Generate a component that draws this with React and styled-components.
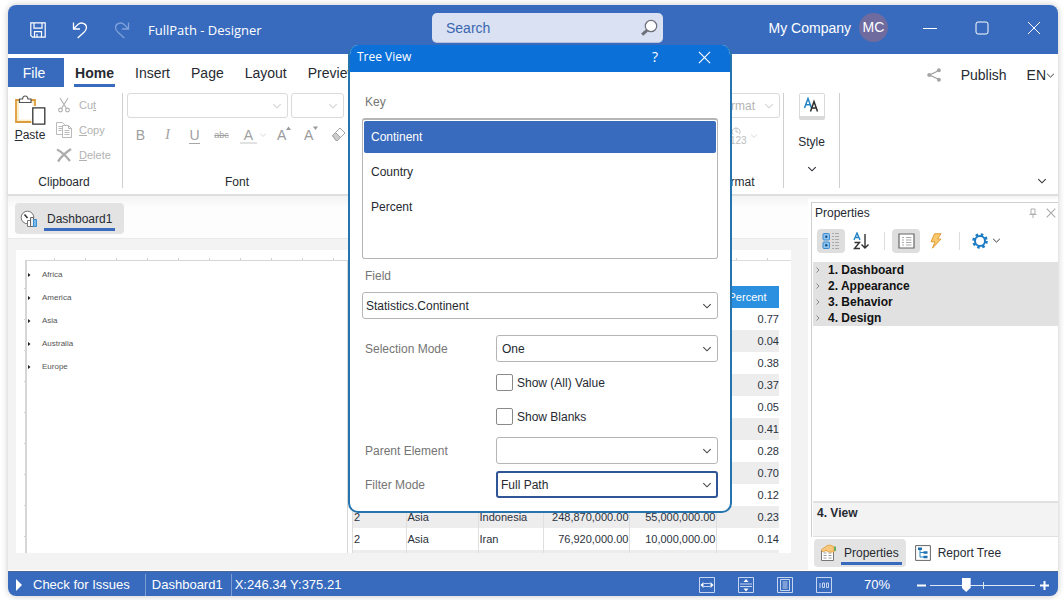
import React, { useState } from "react";
import styled, { createGlobalStyle, css } from "styled-components";

const blue = "#386bbd";
const grey = "#f3f3f3";
const ink = "#262a31";

const Global = createGlobalStyle`
  * { box-sizing: border-box; }
  body { margin: 0; background: #fff; color: ${ink}; font-family: "Liberation Sans", Arial, sans-serif; font-size: 12px; line-height: 16px; }
  button, input, select { font: inherit; color: inherit; }
  button { padding: 0; border: 0; background: none; }
  svg { display: block; flex: none; }
`;

const Window = styled.div`
  position: relative;
  display: flex;
  flex-direction: column;
  margin: 5px 6px 4px 8px;
  height: calc(100vh - 9px);
  min-width: 1000px;
  border-radius: 8px;
  box-shadow: 0 0 7px rgba(0, 0, 0, 0.22);
  background: #fff;
`;

/* title bar */
const TitleBar = styled.header`
  display: grid;
  grid-template-columns: 424fr 231px 395fr;
  flex: none;
  height: 49px;
  background: ${blue};
  border-radius: 8px 8px 0 0;
  color: #fff;
`;
const QuickAccess = styled.div`
  display: flex;
  align-items: center;
  padding-left: 22px;
  gap: 26px;
`;
const IconButton = styled.button`
  display: flex;
  align-items: center;
  justify-content: center;
  flex: none;
  width: ${(p) => p.$size || 16}px;
  height: ${(p) => p.$size || 16}px;
`;
const WindowTitle = styled.h1`
  margin: 0 0 0 -8px;
  font: 400 13px/18px "Open Sans", sans-serif;
`;
const SearchBox = styled.label`
  display: flex;
  align-items: center;
  height: 30px;
  margin-top: 8px;
  padding: 0 5px 0 14px;
  border-radius: 5px;
  background: #d9e1f2;
  border-bottom: 1px solid #b6c2dc;
  color: ${blue};
`;
const SearchInput = styled.input`
  flex: 1;
  min-width: 0;
  padding: 0;
  border: 0;
  outline: 0;
  background: none;
  font-size: 14px;
  &::placeholder { color: #3a67b0; opacity: 1; }
`;
const Account = styled.div`
  display: flex;
  align-items: center;
  justify-content: flex-end;
  padding: 0 17px 4px 0;
  font-size: 14px;
`;
const Avatar = styled.span`
  width: 29px;
  margin: 0 35px 0 8px;
  border-radius: 50%;
  background: #6f6b9f;
  line-height: 29px;
  text-align: center;
`;
const WindowButtons = styled.div`
  display: flex;
  gap: 38px;
`;

/* ribbon */
const RibbonTabs = styled.nav`
  display: flex;
  flex: none;
  height: 33px;
  padding-top: 4px;
  font-size: 14px;
`;
const FileTab = styled.button`
  width: 56px;
  height: 29px;
  padding-right: 4px;
  background: ${blue};
  color: #fff;
`;
const RibbonTab = styled.button`
  height: 29px;
  margin-left: ${(p) => (p.$active ? 10 : 21)}px;
  ${(p) =>
    p.$active &&
    css`
      width: 41px;
      margin-right: -1px;
      font-weight: 700;
      box-shadow: inset 0 -3px ${blue};
    `}
`;
const RibbonActions = styled.div`
  display: flex;
  align-items: center;
  gap: 20px;
  margin-left: auto;
  padding: 5px 3px 0 0;
`;
const LanguageButton = styled.button`
  display: flex;
  align-items: center;
`;
const Ribbon = styled.section`
  display: flex;
  flex: none;
  height: 109px;
  padding: 6px 0;
  border-bottom: 2px solid #dedede;
  box-shadow: 0 2px 3px rgba(0, 0, 0, 0.06);
`;
const Group = styled.div`
  display: flex;
  flex-direction: column;
  width: ${(p) => p.$width}px;
  margin-left: ${(p) => p.$offset || 0}px;
  border-right: 1px solid #cfcfcf;
`;
const GroupBody = styled.div`
  display: flex;
  flex: 1;
  flex-direction: ${(p) => (p.$column ? "column" : "row")};
`;
const GroupLabel = styled.div`
  padding-right: 2px;
  line-height: 12px;
  text-align: center;
`;
const PasteButton = styled.button`
  display: flex;
  flex-direction: column;
  align-items: center;
  gap: 2px;
  width: 44px;
  height: 52px;
  padding-top: 2px;
`;
const Commands = styled.div`
  display: flex;
  flex-direction: column;
  gap: 9px;
  padding: 4px 0 0 4px;
`;
const Command = styled.button`
  display: flex;
  align-items: center;
  gap: 7px;
  height: 16px;
  font-size: 11px;
  color: #b2b2b2;
`;
const FontPickers = styled.div`
  display: flex;
  gap: 3px;
  padding-left: 4px;
`;
const FontTools = styled.div`
  display: flex;
  gap: 10px;
  padding: 8px 0 0 9px;
`;
const FormatTools = styled.div`
  display: flex;
  justify-content: flex-end;
  padding: 8px 25px 0 0;
`;
const StyleButton = styled.button`
  display: flex;
  flex-direction: column;
  align-items: center;
  width: 100%;
  gap: 14px;
`;
const StyleTile = styled.span`
  display: flex;
  justify-content: center;
  width: 26px;
  height: 27px;
  padding-top: 3px;
  border: 1px solid #d9d9d9;
  border-bottom-width: 4px;
  border-radius: 2px;
`;
const CollapseButton = styled.button`
  align-self: flex-end;
  margin: 0 11px 0 auto;
  padding: 2px 0;
`;

/* drop-downs */
const SelectFrame = styled.span`
  position: relative;
  display: block;
  width: ${(p) => (p.$width ? p.$width + "px" : "auto")};
  color: ${(p) => (p.$faded ? "#d2d2d2" : "#444")};
  svg { position: absolute; right: 6px; top: calc(50% - 5px); pointer-events: none; }
`;
const SelectControl = styled.select`
  display: block;
  appearance: none;
  width: 100%;
  height: ${(p) => p.$height || 27}px;
  padding: 0 20px 0 ${(p) => p.$inset || 5}px;
  border: ${(p) => (p.$focused ? `2px solid #2f5597` : `1px solid ${p.$faded ? "#dadada" : "#b5b5b5"}`)};
  border-radius: 3px;
  outline: 0;
  background: #fff;
  color: ${(p) => (p.$faded ? "#b5b5b5" : ink)};
  opacity: 1;
`;

/* work area */
const WorkArea = styled.main`
  display: flex;
  flex: 1;
  min-height: 0;
`;
const Designer = styled.section`
  display: flex;
  flex-direction: column;
  flex: 1;
  min-width: 0;
  margin-right: 3px;
  border-bottom: 1px solid #fff;
  background: ${grey};
`;
const DocTabs = styled.div`
  flex: none;
  height: 43px;
  padding: 7px 0 0 7px;
  border-bottom: 1px solid #e9e9e9;
  background: linear-gradient(#f3f3f3, #fdfdfd 12px);
`;
const DocTab = styled.button`
  display: flex;
  align-items: center;
  gap: 6px;
  height: 31px;
  padding: 0 9px 0 5px;
  border-radius: 4px;
  background: #e3e3e3;
`;
const Underlined = styled.span`
  padding: 4px 3px;
  box-shadow: inset 0 -3px ${blue};
`;
const Sheet = styled.div`
  display: flex;
  flex: 1;
  min-height: 0;
  margin: 11px 17px 17px 8px;
  padding-left: 9px;
  overflow: hidden;
  background:
    repeating-linear-gradient(90deg, transparent 0 30px, #d0d0d0 30px 31px) 8px 8px / 100% 2px no-repeat,
    repeating-linear-gradient(transparent 0 30px, #d0d0d0 30px 31px) 8px 8px / 2px 100% no-repeat,
    #fff;
`;
const TreePanel = styled.ul`
  width: 323px;
  flex: none;
  margin: 10px 0 0;
  padding: 2px 0 0;
  list-style: none;
  border: 1px solid #d6d6d6;
  border-width: 1px 1px 0 2px;
`;
const TreeItem = styled.li`
  display: flex;
  align-items: center;
  gap: 11px;
  height: 23px;
  padding-left: 1px;
  font-size: 8px;
  color: #555;
`;
const TablePanel = styled.div`
  flex: 1;
  margin: 10px 0 0 4px;
  padding: 25px 13px 0 0;
  border: 1px solid #dcdcdc;
  border-width: 1px 0 0 1px;
`;
const DataTable = styled.table`
  width: 100%;
  table-layout: fixed;
  border-collapse: collapse;
  font-size: 11px;
  color: #2b323d;
`;
const HeadCell = styled.th`
  height: 22px;
  padding: 0;
  background: #2b90df;
  color: #fff;
  font-weight: 400;
`;
const Row = styled.tr`
  background: ${(p) => (p.$shaded ? "#ededed" : "#fff")};
`;
const Cell = styled.td`
  height: 22px;
  padding: 0 0 0 1px;
  border-right: ${(p) => (p.$last ? 0 : 1)}px solid #dfdfdf;
  text-align: ${(p) => (p.$number ? "right" : "left")};
  line-height: 14px;
`;

/* properties */
const Properties = styled.aside`
  display: flex;
  flex-direction: column;
  flex: none;
  width: 247px;
  padding: 6px 0 4px;
`;
const PropertiesFrame = styled.div`
  display: flex;
  flex-direction: column;
  flex: 1;
  border: 1px solid #cfcfcf;
  border-width: 1px 0 0 1px;
`;
const PanelTitle = styled.div`
  display: flex;
  align-items: center;
  gap: 8px;
  height: 19px;
  padding: 0 2px 0 3px;
  color: #a8a8a8;
`;
const PanelName = styled.h2`
  flex: 1;
  margin: 0;
  font-size: 12px;
  font-weight: 400;
  color: ${ink};
`;
const PanelTools = styled.div`
  display: flex;
  align-items: center;
  height: 40px;
  padding: 0 0 3px 5px;
`;
const ToolButton = styled.button`
  display: flex;
  align-items: center;
  justify-content: center;
  gap: 4px;
  width: ${(p) => p.$width || 28}px;
  height: 24px;
  margin-right: 2px;
  border-radius: 4px;
  background: ${(p) => (p.$active ? "#dedede" : "none")};
`;
const Divider = styled.span`
  width: 1px;
  height: 18px;
  margin: 0 7px;
  background: #ddd;
`;
const Categories = styled.ul`
  margin: 0 0 0 1px;
  padding: 0;
  list-style: none;
  background: #e1e1e1;
  font-weight: 700;
`;
const Category = styled.li`
  display: flex;
  align-items: center;
  gap: 8px;
  height: 16px;
  padding-left: 3px;
  color: #111;
`;
const Description = styled.div`
  height: 36px;
  margin: auto 0 0 1px;
  padding: 2px 4px;
  border: 1px solid #e0e0e0;
  border-width: 2px 0 1px;
  background: ${grey};
  font-weight: 700;
`;
const PanelTabs = styled.div`
  display: flex;
  align-items: center;
  gap: 9px;
  padding: 2px 0 0 3px;
`;
const PanelTab = styled.button`
  display: flex;
  align-items: center;
  gap: ${(p) => (p.$active ? 4 : 7)}px;
  height: 28px;
  padding: ${(p) => (p.$active ? "0 4px 0 6px" : "0")};
  border-radius: 4px;
  background: ${(p) => (p.$active ? "#e3e3e3" : "none")};
`;

/* status bar */
const StatusBar = styled.footer`
  display: flex;
  align-items: center;
  flex: none;
  height: 25px;
  padding: 2px 9px 0 8px;
  border-top: 1px solid #4a6797;
  border-radius: 0 0 8px 8px;
  background: ${blue};
  color: #fff;
  font-size: 13px;
`;
const StatusButton = styled.button`
  display: flex;
  align-items: center;
  gap: 11px;
  padding-right: 15px;
`;
const StatusText = styled.span`
  padding: 0 ${(p) => p.$after || 0}px 0 ${(p) => p.$before || 3}px;
  border-left: 1px solid #7d9dd2;
  line-height: 22px;
`;
const ViewButtons = styled.div`
  display: flex;
  gap: 23px;
  margin-left: auto;
`;
const ZoomValue = styled.span`
  width: 85px;
  padding-left: 32px;
`;
const ZoomSlider = styled.input`
  appearance: none;
  width: 105px;
  height: 15px;
  margin: 0 5px 0 4px;
  background:
    linear-gradient(#dfe8f6, #dfe8f6) 53px 4px / 1px 7px no-repeat,
    linear-gradient(#dfe8f6, #dfe8f6) 0 7px / 100% 1px no-repeat;
  &::-webkit-slider-thumb {
    appearance: none;
    width: 9px;
    height: 14px;
    background: #fff;
    clip-path: polygon(0 0, 100% 0, 100% 70%, 50% 100%, 0 70%);
  }
`;

/* dialog */
const Dialog = styled.div`
  position: absolute;
  top: 40px;
  left: calc(50% - 185px);
  width: 384px;
  overflow: hidden;
  border: 2px solid #2574ae;
  border-top: 0;
  border-radius: 10px;
  background: #fff;
`;
const DialogBar = styled.div`
  display: flex;
  align-items: center;
  height: 27px;
  margin: 0 -2px;
  padding: 0 21px 3px 9px;
  background: #0b71d9;
  color: #fff;
`;
const DialogTitle = styled.h2`
  flex: 1;
  margin: 0;
  font: 400 12px/18px "Open Sans", sans-serif;
`;
const HelpButton = styled(IconButton)`
  margin-right: 34px;
  font: 400 14px/16px "Open Sans", sans-serif;
`;
const DialogBody = styled.div`
  display: flex;
  flex-direction: column;
  padding: 22px 12px 13px;
`;
const Caption = styled.label`
  display: block;
  padding-left: 3px;
  color: #757575;
`;
const KeyList = styled.div`
  display: flex;
  flex-direction: column;
  gap: 3px;
  height: 141px;
  margin: 8px 0 9px;
  padding: 1px;
  border: 1px solid #b5b5b5;
  border-top-width: 2px;
  border-radius: 3px;
`;
const KeyOption = styled.button`
  flex: none;
  height: 32px;
  padding-left: 7px;
  border-radius: 2px;
  background: ${(p) => (p.$selected ? blue : "none")};
  color: ${(p) => (p.$selected ? "#fff" : ink)};
  text-align: left;
`;
const FieldSlot = styled.div`
  margin: 8px 0 16px;
`;
const Form = styled.div`
  display: grid;
  grid-template-columns: 134px 1fr;
  grid-auto-rows: 27px;
  align-items: center;
  row-gap: 7px;
`;
const CheckLabel = styled.label`
  grid-column: 2;
  display: flex;
  align-items: center;
  gap: 4px;
`;
const CheckBox = styled.input`
  appearance: none;
  width: 17px;
  height: 17px;
  margin: 0;
  border: 1px solid #8a8a8a;
  border-radius: 2px;
  background: #fff;
  &:checked { background: ${blue}; }
`;

function Chevron({ color = "currentColor", size = 10 }) {
  return (
    <svg width={size} height={size} viewBox="0 0 10 10" fill="none" stroke={color} strokeWidth="1.1">
      <path d="M1.3 3.2 5 6.8 8.7 3.2" />
    </svg>
  );
}

function Select({ options, width, height, inset, focused, faded, ...rest }) {
  return (
    <SelectFrame $width={width} $faded={faded}>
      <SelectControl $height={height} $inset={inset} $focused={focused} $faded={faded} disabled={faded} {...rest}>
        {options.map((o) => (
          <option key={o}>{o}</option>
        ))}
      </SelectControl>
      <Chevron />
    </SelectFrame>
  );
}

const Svg = ({ w = 16, h = w, box, children, ...rest }) => (
  <svg width={w} height={h} viewBox={box || `0 0 ${w} ${h}`} fill="none" {...rest}>
    {children}
  </svg>
);

const SaveIcon = () => (
  <Svg stroke="#fff" strokeWidth="1.2">
    <path d="M.8.8h14.4v14.4H2.6L.8 13.4zM4 .8v5.4h8V.8M4.5 15V9.6h7V15M7 15v-3" />
  </Svg>
);
const UndoIcon = ({ flip }) => (
  <Svg w={16} h={18} stroke={flip ? "#7fa2dc" : "#fff"} strokeWidth="1.3">
    <path
      transform={flip ? "matrix(-1 0 0 1 16 0)" : undefined}
      d="M1.5 1.5V8H8M2 7.5 6 3.4C9 .6 14.5 2.4 14.5 6.6c0 1.900-1 3.200-2.500 4.600L5.700 17"
    />
  </Svg>
);
const SearchIcon = () => (
  <Svg w={18} stroke="#6d7078">
    <circle cx="11" cy="7" r="5.7" fill="#fff" strokeWidth="1.2" />
    <path d="M7 11.4 2.2 15.6" strokeWidth="3" />
  </Svg>
);
const CrossIcon = ({ size = 14, color = "currentColor", weight = 1.2 }) => (
  <Svg w={size} box="0 0 14 14" stroke={color} strokeWidth={weight}>
    <path d="m1 1 12 12M13 1 1 13" />
  </Svg>
);
const ShareIcon = () => (
  <Svg w={14} stroke="#9c9c9c">
    <path d="M12 2.5 2.500 7 12 11.500" strokeWidth="1.200" />
    <circle cx="2.300" cy="7" r="2.100" fill="#a5a5a5" stroke="none" />
    <circle cx="11.900" cy="2.300" r="2" fill="#a5a5a5" stroke="none" />
    <circle cx="11.900" cy="11.700" r="2" fill="#a5a5a5" stroke="none" />
  </Svg>
);
const PasteIcon = () => (
  <Svg w={32} h={30}>
    <path d="M2 5h19v22H2z" fill="#fdeecb" stroke="#dd9c3c" strokeWidth="1.8" />
    <path d="M5 7.500h13.500v17H5z" fill="#fff" />
    <path d="M5.500 7.500V4h3C8.700 1.900 10 1 11.200 1s2.600.9 2.800 3h3v3.500z" fill="#fff" stroke="#555" strokeWidth="1.200" />
    <path d="M17.300 11h13.500v18.500H17.300z" fill="#fff" />
    <path d="M18.800 12.800h12v16.400h-12z" fill="#fff" stroke="#333" strokeWidth="1.300" />
  </Svg>
);
const CutIcon = () => (
  <Svg stroke="#b0b0b0" strokeWidth="1.100">
    <path d="m4 1 6.500 10.500M12 1 5.500 11.500" />
    <circle cx="4.500" cy="13" r="1.900" />
    <circle cx="11.500" cy="13" r="1.900" />
  </Svg>
);
const CopyIcon = () => (
  <Svg stroke="#b9b9b9">
    <path d="M.5.5h6l2 2v10h-8zM2.500 4.500h4M2.500 6.500h4M2.500 8.500h3" />
    <path d="M6.500 3.500h6l3 3v9h-9z" fill="#fff" />
    <path d="M12.500 3.500v3h3M8.500 8.500h5M8.500 10.500h5M8.500 12.500h5" />
  </Svg>
);
const DeleteIcon = () => (
  <Svg stroke="#adadad" strokeWidth="2.300">
    <path d="M1 2.500C6 5 10 9 14 14M15 2C9 6 5 10 2 14.500" />
  </Svg>
);

const faint = "#a3a3a3";
const Glyph = styled.button`
  flex: none;
  width: 17px;
  height: 18px;
  color: #a0a0a0;
  font: ${(p) => (p.$italic ? "italic" : "normal")} 400 14px/18px ${(p) => (p.$italic ? `"Liberation Serif", serif` : `"Liberation Sans", sans-serif`)};
  text-align: center;
`;
const UnderGlyph = styled(Glyph)`
  border-bottom: 1px solid #a6a6a6;
  width: 11px;
  margin: 0 3px;
`;
const StruckGlyph = styled(Glyph)`
  font-size: 9px;
  text-decoration: line-through;
`;
const SwatchGlyph = styled(Glyph)`
  border-bottom: 2px solid #e2e2e2;
`;
const SizeGlyph = styled.button`
  display: flex;
  width: 17px;
  height: 18px;
  color: #9a9a9a;
  font-size: 14px;
  line-height: 19px;
`;
const ColorGlyph = styled.button`
  display: flex;
  align-items: center;
  gap: 2px;
  color: #d5d5d5;
`;
const EraserIcon = () => (
  <Svg stroke={faint}>
    <path d="M1.500 9.500 9 2l5 5-7.500 7.500H5z" />
    <path d="m1.500 9.500 3-3 5 5-3 3H5z" fill="#ccc" />
  </Svg>
);
const Arrow = ({ down }) => (
  <Svg w={5} h={4}>
    <path fill="#9a9a9a" d={down ? "M0 .5h5L2.500 4z" : "M0 4h5L2.500.5z"} />
  </Svg>
);
const DateFormatIcon = () => (
  <Svg w={18} h={20} stroke="#c6c6c6">
    <path d="M3 8.500A4 4 0 1 1 9.500 8M6 2v4h2.500" />
    <text x="0" y="17.500" fill="#bdbdbd" stroke="none" fontSize="10">123</text>
  </Svg>
);
const StyleIcon = () => (
  <Svg w={18} h={16} strokeWidth="1.500">
    <path d="M1.500 11 5 1.500 8.500 11M2.700 7.800h4.600" stroke="#2483c5" />
    <path d="m7.500 14.500 3.500-10 3.500 10M8.700 11h4.600" stroke="#303030" />
  </Svg>
);
const DashboardIcon = () => (
  <Svg w={18} h={18}>
    <circle cx="7.500" cy="7.500" r="6.300" fill="#fff" stroke="#777" />
    <path d="m4.500 4.500 3 3.500" stroke="#333" strokeWidth="1.600" />
    <path d="M7.500 10.500h3v6h-3z" fill="#fff" stroke="#777" />
    <path d="M10.500 7.500h3v9h-3z" fill="#eee" stroke="#666" />
    <path d="M13.500 9.500h3v7h-3z" fill="#79b8ea" stroke="#3b8fcf" />
  </Svg>
);
const CategoryIcon = () => (
  <Svg w={18} h={18}>
    <rect x="1" y="1.500" width="6.500" height="6.500" rx="1" fill="#8cc3ef" stroke="#3d8bd0" />
    <rect x="1" y="10" width="6.500" height="6.500" rx="1" fill="#8cc3ef" stroke="#3d8bd0" />
    <circle cx="4.250" cy="4.750" r="1.200" fill="#174d84" />
    <circle cx="4.250" cy="13.250" r="1.200" fill="#174d84" />
    <path d="M10 1.500h2m1 0h4M10 4.500h2m1 0h4M10 7.500h2m1 0h4M10 10.500h2m1 0h4M10 13.500h2m1 0h4M10 16.500h2m1 0h4" stroke="#aaa" />
  </Svg>
);
const SortIcon = () => (
  <Svg w={18} h={18}>
    <path d="M2 8 5 1l3 7M3 5.500h4" stroke="#2483c5" strokeWidth="1.400" />
    <path d="M2.500 10.500h5L2.500 16.500h5.500" stroke="#333" strokeWidth="1.400" />
    <path d="M13 2v14M9.500 12.500 13 16l3.500-3.500" stroke="#333" strokeWidth="1.400" />
  </Svg>
);
const ListIcon = () => (
  <Svg w={17} h={16}>
    <path d="M1 1h15v14H1z" fill="#fff" stroke="#666" strokeWidth="1.200" />
    <path d="M4 4.500h2m2 0h5.500M4 7h2m2 0h5.500M4 9.500h2m2 0h5.500M4 12h2m2 0h5.500" stroke="#aaa" />
  </Svg>
);
const BoltIcon = () => (
  <Svg w={12} h={16}>
    <path d="M4.500.8h6.500L7.500 6H11L2.500 15.200 5 8.800H1z" fill="#f8c96d" stroke="#e39b34" />
  </Svg>
);
const GearIcon = () => (
  <Svg w={16} stroke="#1d7cc4">
    <circle cx="8" cy="8" r="6.300" strokeWidth="3" strokeDasharray="2.470 2.470" />
    <circle cx="8" cy="8" r="5" strokeWidth="2" />
  </Svg>
);
const PinIcon = () => (
  <Svg w={8} h={10} stroke="#b0b0b0">
    <path d="M2 1h4v5H2zM.5 6.500h7M4 6.500V10" />
  </Svg>
);
const PropertiesIcon = () => (
  <Svg w={17} h={18}>
    <path d="M1.500 6.500h12v10h-12z" fill="#fff" stroke="#777" />
    <path d="M3.500 9h3M8.500 9h3M3.500 11.500h3M8.500 11.500h3M3.500 14h3M8.500 14h3" stroke="#999" />
    <path d="M1 6 6.500 2C9 .6 11 .8 14 3v5H8.500L6 6.500 3 8z" fill="#f7c77b" stroke="#df9b3b" strokeWidth=".8" />
    <path d="M14 2.500h2V7h-2z" fill="#6fae62" />
  </Svg>
);
const TreeIcon = () => (
  <Svg w={16}>
    <path d="M.6.600h14.800v14.800H.6z" fill="#fff" stroke="#666" />
    <path d="M5 4v8h4M5 7.500h4" stroke="#2483c5" />
    <path d="M3 2.500h4v2.500H3zM8.500 6.200h4v2.500h-4zM8.500 10.700h4v2.500h-4z" fill="#1f6fb0" />
  </Svg>
);

const ViewIcon = ({ kind }) => (
  <Svg w={16} stroke="#c6d6f0">
    <path d="M.5.5h15v15H.5z" />
    {kind === "width" && (
      <>
        <path d="M5 6.500h6M5 9.500h6" />
        <path d="M4.500 5v6L1.500 8zM11.500 5v6l3-3z" fill="#fff" stroke="none" />
      </>
    )}
    {kind === "height" && (
      <>
        <path d="M2 7h12M2 9.500h12" />
        <path d="M5.500 5h5L8 2zM5.500 11.500h5l-2.500 3z" fill="#fff" stroke="none" />
      </>
    )}
    {kind === "page" && <path d="M3.500 2.500h9v11h-9zM5.500 5h5M5.500 7h5M5.500 9h5M5.500 11h5" />}
    {kind === "full" && <path d="M4 6v5M6.500 6h2v4.500h-2zM10.500 6h2v4.500h-2z" />}
  </Svg>
);

const countries = ["Africa", "America", "Asia", "Australia", "Europe"];
const percents = ["0.77", "0.04", "0.38", "0.37", "0.05", "0.41", "0.28", "0.70", "0.12"];
const rows = [
  ...percents.map((p) => ["", "", "", "", "", p]),
  ["2", "Asia", "Indonesia", "248,870,000.00", "55,000,000.00", "0.23"],
  ["2", "Asia", "Iran", "76,920,000.00", "10,000,000.00", "0.14"],
  ["", "", "", "", "", ""],
];
const columns = [53, 72, 65, 86, 87, 63];

function TreeViewDialog() {
  const [key, setKey] = useState("Continent");
  return (
    <Dialog role="dialog" aria-labelledby="dialog-title">
      <DialogBar>
        <DialogTitle id="dialog-title">Tree View</DialogTitle>
        <HelpButton>?</HelpButton>
        <IconButton aria-label="Close dialog" $size={14}>
          <CrossIcon size={13} />
        </IconButton>
      </DialogBar>
      <DialogBody>
        <Caption as="span" id="key-label">Key</Caption>
        <KeyList role="listbox" aria-labelledby="key-label">
          {["Continent", "Country", "Percent"].map((k) => (
            <KeyOption key={k} role="option" aria-selected={k === key} $selected={k === key} onClick={() => setKey(k)}>
              {k}
            </KeyOption>
          ))}
        </KeyList>
        <Caption htmlFor="field">Field</Caption>
        <FieldSlot>
          <Select id="field" options={["Statistics.Continent"]} inset={3} />
        </FieldSlot>
        <Form>
          <Caption htmlFor="selection-mode">Selection Mode</Caption>
          <Select id="selection-mode" options={["One"]} />
          <CheckLabel>
            <CheckBox type="checkbox" />
            Show (All) Value
          </CheckLabel>
          <CheckLabel>
            <CheckBox type="checkbox" />
            Show Blanks
          </CheckLabel>
          <Caption htmlFor="parent-element">Parent Element</Caption>
          <Select id="parent-element" options={[""]} />
          <Caption htmlFor="filter-mode">Filter Mode</Caption>
          <Select id="filter-mode" options={["Full Path"]} inset={3} focused />
        </Form>
      </DialogBody>
    </Dialog>
  );
}

export default function App() {
  return (
    <>
      <Global />
      <Window>
        <TitleBar>
          <QuickAccess>
            <IconButton aria-label="Save"><SaveIcon /></IconButton>
            <IconButton aria-label="Undo"><UndoIcon /></IconButton>
            <IconButton aria-label="Redo"><UndoIcon flip /></IconButton>
            <WindowTitle>FullPath - Designer</WindowTitle>
          </QuickAccess>
          <SearchBox>
            <SearchInput placeholder="Search" aria-label="Search" />
            <SearchIcon />
          </SearchBox>
          <Account>
            My Company
            <Avatar>MC</Avatar>
            <WindowButtons>
              <IconButton aria-label="Minimize" $size={14}>
                <Svg w={14} stroke="#fff"><path d="M0 7.500h14" /></Svg>
              </IconButton>
              <IconButton aria-label="Maximize" $size={14}>
                <Svg w={14} stroke="#fff"><rect x="1" y="1" width="12" height="12" rx="2" /></Svg>
              </IconButton>
              <IconButton aria-label="Close" $size={14}><CrossIcon weight={1} /></IconButton>
            </WindowButtons>
          </Account>
        </TitleBar>

        <RibbonTabs>
          <FileTab>File</FileTab>
          <RibbonTab $active>Home</RibbonTab>
          {["Insert", "Page", "Layout", "Preview"].map((t) => (
            <RibbonTab key={t}>{t}</RibbonTab>
          ))}
          <RibbonActions>
            <IconButton aria-label="Share" $size={14}><ShareIcon /></IconButton>
            <button>Publish</button>
            <LanguageButton>EN<Chevron size={9} color="#333" /></LanguageButton>
          </RibbonActions>
        </RibbonTabs>

        <Ribbon>
          <Group $width={115}>
            <GroupBody>
              <PasteButton>
                <PasteIcon />
                <span><u>P</u>aste</span>
              </PasteButton>
              <Commands>
                <Command><CutIcon /><span>Cu<u>t</u></span></Command>
                <Command><CopyIcon /><span><u>C</u>opy</span></Command>
                <Command><DeleteIcon /><span><u>D</u>elete</span></Command>
              </Commands>
            </GroupBody>
            <GroupLabel>Clipboard</GroupLabel>
          </Group>
          <Group $width={231}>
            <GroupBody $column>
              <FontPickers>
                <Select aria-label="Font family" options={[""]} width={161} height={25} faded />
                <Select aria-label="Font size" options={[""]} width={53} height={25} faded />
              </FontPickers>
              <FontTools>
                <Glyph>B</Glyph>
                <Glyph $italic>I</Glyph>
                <UnderGlyph>U</UnderGlyph>
                <StruckGlyph>abc</StruckGlyph>
                <ColorGlyph><SwatchGlyph as="span">A</SwatchGlyph><Chevron size={8} /></ColorGlyph>
                <SizeGlyph>A<Arrow /></SizeGlyph>
                <SizeGlyph>A<Arrow down /></SizeGlyph>
                <IconButton aria-label="Clear formatting"><EraserIcon /></IconButton>
              </FontTools>
            </GroupBody>
            <GroupLabel>Font</GroupLabel>
          </Group>
          <Group $width={94} $offset={336}>
            <GroupBody $column>
              <Select aria-label="Format" options={["Format"]} width={90} height={25} inset={26} faded />
              <FormatTools>
                <ColorGlyph aria-label="Date format"><DateFormatIcon /><Chevron size={8} /></ColorGlyph>
              </FormatTools>
            </GroupBody>
            <GroupLabel>Format</GroupLabel>
          </Group>
          <Group $width={56}>
            <StyleButton>
              <StyleTile><StyleIcon /></StyleTile>
              Style
              <Chevron />
            </StyleButton>
          </Group>
          <CollapseButton aria-label="Collapse ribbon"><Chevron color="#333" /></CollapseButton>
        </Ribbon>

        <WorkArea>
          <Designer>
            <DocTabs>
              <DocTab>
                <DashboardIcon />
                <Underlined>Dashboard1</Underlined>
              </DocTab>
            </DocTabs>
            <Sheet>
              <TreePanel>
                {countries.map((c) => (
                  <TreeItem key={c}>
                    <Svg w={3} h={4}><path d="M0 0v4l2.500-2z" fill="#222" /></Svg>
                    {c}
                  </TreeItem>
                ))}
              </TreePanel>
              <TablePanel>
                <DataTable>
                  <colgroup>
                    {columns.map((w, i) => <col key={i} width={w} />)}
                  </colgroup>
                  <thead>
                    <tr>
                      {columns.map((w, i) => <HeadCell key={i}>{i === 5 ? "Percent" : ""}</HeadCell>)}
                    </tr>
                  </thead>
                  <tbody>
                    {rows.map((r, i) => (
                      <Row key={i} $shaded={i % 2 === 1}>
                        {r.map((v, j) => (
                          <Cell key={j} $number={j > 2} $last={j === 5}>{v}</Cell>
                        ))}
                      </Row>
                    ))}
                  </tbody>
                </DataTable>
              </TablePanel>
            </Sheet>
          </Designer>

          <Properties>
            <PropertiesFrame>
              <PanelTitle>
                <PanelName>Properties</PanelName>
                <IconButton aria-label="Pin" $size={10}><PinIcon /></IconButton>
                <IconButton aria-label="Close panel" $size={10}><CrossIcon size={10} weight={1.5} /></IconButton>
              </PanelTitle>
              <PanelTools>
                <ToolButton $active aria-label="Categorized"><CategoryIcon /></ToolButton>
                <ToolButton aria-label="Alphabetical"><SortIcon /></ToolButton>
                <Divider />
                <ToolButton $active aria-label="Property list"><ListIcon /></ToolButton>
                <ToolButton aria-label="Events"><BoltIcon /></ToolButton>
                <Divider />
                <ToolButton $width={39} aria-label="Settings"><GearIcon /><Chevron size={9} color="#333" /></ToolButton>
              </PanelTools>
              <Categories>
                {["1. Dashboard", "2. Appearance", "3. Behavior", "4. Design"].map((c) => (
                  <Category key={c}>
                    <Svg w={4} h={6} stroke="#888"><path d="M.5.5 3 3 .5 5.500" /></Svg>
                    {c}
                  </Category>
                ))}
              </Categories>
              <Description>4. View</Description>
            </PropertiesFrame>
            <PanelTabs>
              <PanelTab $active>
                <PropertiesIcon />
                <Underlined>Properties</Underlined>
              </PanelTab>
              <PanelTab>
                <TreeIcon />
                Report Tree
              </PanelTab>
            </PanelTabs>
          </Properties>
        </WorkArea>

        <StatusBar>
          <StatusButton>
            <Svg w={6} h={12}><path d="M0 0v12l6-6z" fill="#fff" /></Svg>
            Check for Issues
          </StatusButton>
          <StatusText $before={6} $after={8}>Dashboard1</StatusText>
          <StatusText>X:246.34 Y:375.21</StatusText>
          <ViewButtons>
            {["width", "height", "page", "full"].map((k) => (
              <IconButton key={k} aria-label={`Zoom ${k}`}><ViewIcon kind={k} /></IconButton>
            ))}
          </ViewButtons>
          <ZoomValue>70%</ZoomValue>
          <IconButton aria-label="Zoom out" $size={9}>
            <Svg w={9} stroke="#fff" strokeWidth="2"><path d="M0 4.500h9" /></Svg>
          </IconButton>
          <ZoomSlider type="range" min="0" max="200" defaultValue="66" aria-label="Zoom" />
          <IconButton aria-label="Zoom in" $size={9}>
            <Svg w={9} stroke="#fff" strokeWidth="2"><path d="M0 4.500h9M4.500 0v9" /></Svg>
          </IconButton>
        </StatusBar>

        <TreeViewDialog />
      </Window>
    </>
  );
}
